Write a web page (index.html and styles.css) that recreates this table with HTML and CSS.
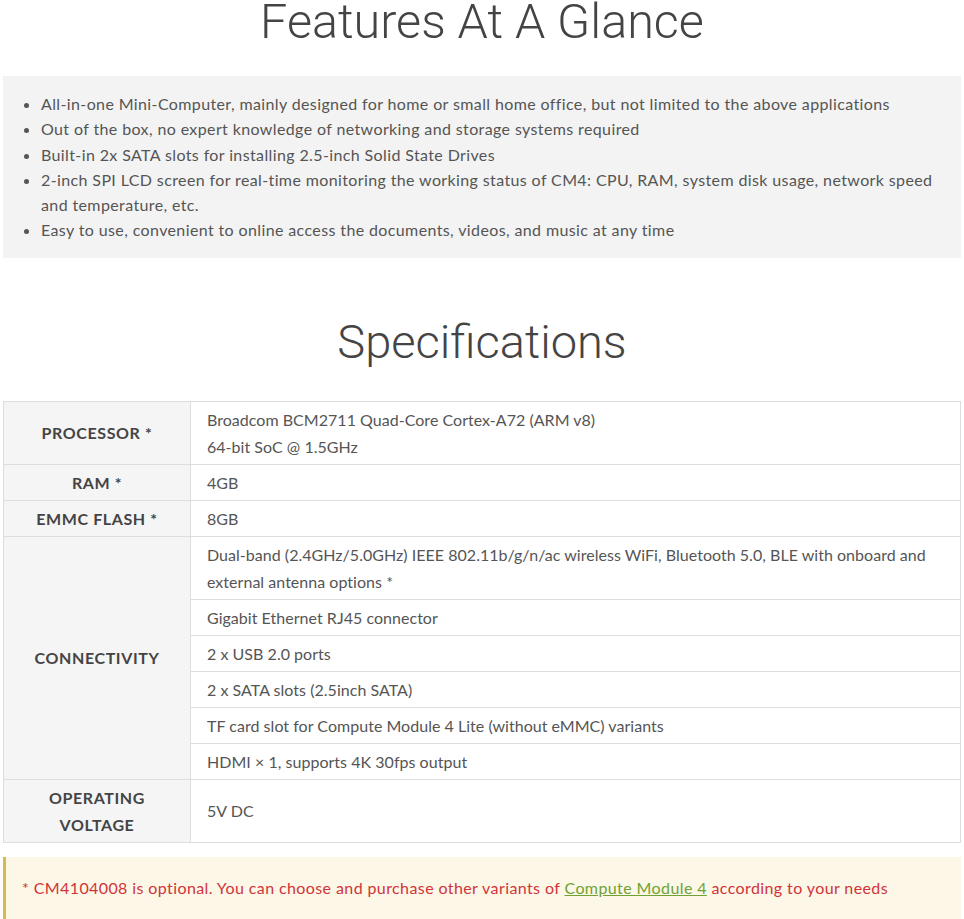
FILE: index.html
```html
<!DOCTYPE html>
<html>
<head>
<meta charset="utf-8">
<link rel="stylesheet" href="styles.css">
</head>
<body>
<div class="page">
  <h2 class="title title-first">Features At A Glance</h2>
  <div class="features">
    <ul>
      <li>All-in-one Mini-Computer, mainly designed for home or small home office, but not limited to the above applications</li>
      <li>Out of the box, no expert knowledge of networking and storage systems required</li>
      <li>Built-in 2x SATA slots for installing 2.5-inch Solid State Drives</li>
      <li>2-inch SPI LCD screen for real-time monitoring the working status of CM4: CPU, RAM, system disk usage, network speed and temperature, etc.</li>
      <li>Easy to use, convenient to online access the documents, videos, and music at any time</li>
    </ul>
  </div>
  <h2 class="title title-spec">Specifications</h2>
  <table class="spec">
    <tr><th>PROCESSOR *</th><td>Broadcom BCM2711 Quad-Core Cortex-A72 (ARM v8)<br>64-bit SoC @ 1.5GHz</td></tr>
    <tr><th>RAM *</th><td>4GB</td></tr>
    <tr><th>EMMC FLASH *</th><td>8GB</td></tr>
    <tr><th rowspan="6">CONNECTIVITY</th><td>Dual-band (2.4GHz/5.0GHz) IEEE 802.11b/g/n/ac wireless WiFi, Bluetooth 5.0, BLE with onboard and external antenna options *</td></tr>
    <tr><td>Gigabit Ethernet RJ45 connector</td></tr>
    <tr><td>2 x USB 2.0 ports</td></tr>
    <tr><td>2 x SATA slots (2.5inch SATA)</td></tr>
    <tr><td>TF card slot for Compute Module 4 Lite (without eMMC) variants</td></tr>
    <tr><td>HDMI × 1, supports 4K 30fps output</td></tr>
    <tr><th>OPERATING<br>VOLTAGE</th><td>5V DC</td></tr>
  </table>
  <div class="note">* CM4104008 is optional. You can choose and purchase other variants of <a href="#">Compute Module 4</a> according to your needs</div>
</div>
</body>
</html>
```
FILE: styles.css
```css
html, body { margin: 0; padding: 0; background: #fff; }
body { font-family: Lato, "Noto Sans", sans-serif; font-size: 16px; color: #555; letter-spacing: 0.38px; }
.page { padding: 0 3px; overflow: hidden; height: 919px; }
.title {
  font-family: Roboto, sans-serif;
  font-weight: 300;
  font-size: 48.5px;
  line-height: 44px;
  letter-spacing: 0;
  color: #444;
  text-align: center;
  margin: 0;
}
.title-first { margin-bottom: 32px; }
.features { background: #f3f3f3; padding: 15px 0 15px; }
.features ul { margin: 0; padding-left: 38px; padding-right: 10px; }
.features li { line-height: 25.3px; }
.title-spec { font-size: 47px; margin-top: 62px; margin-bottom: 37px; }
.spec { width: 100%; border-collapse: collapse; border: 1px solid #ddd; }
.spec th, .spec td { border: 1px solid #ddd; line-height: 27px; padding: 4px 16px; vertical-align: middle; }
.spec th { width: 154px; background: #f5f5f5; color: #444; font-weight: 700; text-align: center; letter-spacing: 0.6px; }
.spec td { text-align: left; letter-spacing: 0.03px; }
.note {
  margin-top: 14px;
  background: #fdf7e7;
  border-left: 3px solid #d6bb4c;
  color: #d0343a;
  padding: 19px 16px 30px;
  line-height: 24px;
  letter-spacing: 0.4px;
}
.note a { color: #6ea333; text-decoration: underline; }
```
